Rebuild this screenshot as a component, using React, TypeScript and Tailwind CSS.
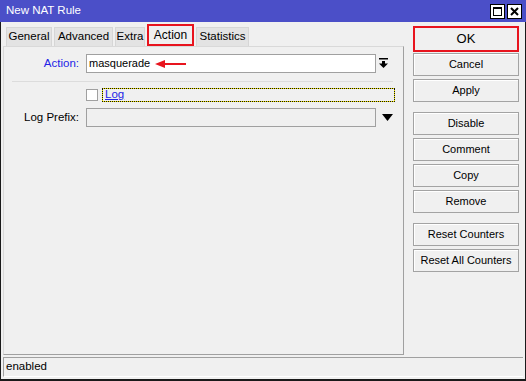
import React from "react";

const tabs = [
  { name: "General", w: "w-[46px]" },
  { name: "Advanced", w: "w-[59px]" },
  { name: "Extra", w: "w-[30px]" },
  { name: "Action", w: "w-[47px]", active: true },
  { name: "Statistics", w: "w-[53px]" },
];

function Btn({ label, red }: { label: string; red?: boolean }) {
  if (red) {
    return (
      <div className="h-[26px] w-[106px] border-2 border-[#e8141e] bg-[#f0f0f0] flex items-center justify-center text-[13px] text-black">
        {label}
      </div>
    );
  }
  return (
    <div className="h-[23px] w-[106px] border border-[#a3a3a3] bg-[#f0f0f0] shadow-[inset_1px_1px_0_#ffffff] flex items-center justify-center text-[11px] text-black">
      {label}
    </div>
  );
}

function ExpandIcon() {
  return (
    <svg width="9" height="10" viewBox="0 0 9 10">
      <rect x="0" y="0" width="9" height="1.5" fill="#000" />
      <rect x="3" y="3" width="3" height="3" fill="#000" />
      <polygon points="0,5.5 9,5.5 4.5,10" fill="#000" />
    </svg>
  );
}

export default function App() {
  return (
    <div className="w-[526px] h-[381px] bg-[#f0f0f0] flex flex-col overflow-hidden" style={{ fontFamily: '"Liberation Sans", Arial, sans-serif' }}>
      {/* Title bar */}
      <div className="h-[22px] bg-[#4b4fc8] flex items-center pl-[6px] pr-[4px] shrink-0">
        <span className="text-white text-[11.5px] flex-1">New NAT Rule</span>
        <div className="flex gap-[2px] mt-[1px]">
          <div className="w-[15px] h-[15px] bg-white border border-black flex items-center justify-center">
            <div className="w-[9px] h-[9px] border border-black border-t-2" />
          </div>
          <div className="w-[15px] h-[15px] bg-white border border-black flex items-center justify-center">
            <svg width="9" height="9" viewBox="0 0 9 9">
              <path d="M1 1 L8 8 M8 1 L1 8" stroke="#000" strokeWidth="2" />
            </svg>
          </div>
        </div>
      </div>

      {/* Window frame */}
      <div className="flex-1 flex flex-col border-l border-r border-b-2 border-[#1a1a1a]">
        <div className="h-[333px] flex">
          {/* Left: tabs + panel */}
          <div className="ml-[2px] w-[401px] flex flex-col">
            <div className="h-[24px] flex items-end gap-[2px] pl-[3px]">
              {tabs.map((t) =>
                t.active ? (
                  <div
                    key={t.name}
                    className={`${t.w} h-[22px] border-2 border-[#e8141e] bg-[#f0f0f0] flex items-center justify-center text-[12px] text-black`}
                  >
                    {t.name}
                  </div>
                ) : (
                  <div
                    key={t.name}
                    className={`${t.w} h-[19px] border border-b-0 border-[#d6d6d6] bg-[#e3e3e3] flex items-center justify-center text-[11.5px] text-black`}
                  >
                    {t.name}
                  </div>
                )
              )}
            </div>
            <div className="flex-1 border-l border-t border-[#d9d9d9] border-r border-r-[#a0a0a0] border-b border-b-[#a0a0a0] bg-[#f0f0f0] text-[11px]">
              {/* Action row */}
              <div className="mt-[7px] h-[19px] flex items-center">
                <span className="w-[75px] text-right text-[#2323e6] text-[11.5px]">Action:</span>
                <div className="ml-[7px] w-[290px] h-[19px] bg-white border border-[#a0a0a0] flex items-center pl-[2px] text-[11px] text-black relative">
                  masquerade
                  <svg className="absolute left-[68px] top-[5px]" width="31" height="8" viewBox="0 0 31 8">
                    <polygon points="0,4 10,0 10,3 31,3 31,5 10,5 10,8" fill="#e8141e" />
                  </svg>
                </div>
                <div className="ml-[3px] mt-[-1px]">
                  <ExpandIcon />
                </div>
              </div>
              {/* Separator */}
              <div className="mt-[8px] ml-[8px] w-[381px] h-px bg-[#dcdcdc]" />
              {/* Log checkbox */}
              <div className="mt-[6px] h-[14px] flex items-center">
                <div className="ml-[82px] w-[12px] h-[12px] bg-white border border-[#a0a0a0]" />
                <div className="ml-[4px] w-[293px] h-[14px] bg-[#f2e600]">
                  <div className="w-full h-full border border-dotted border-[#111] bg-[#f0f0f0] bg-clip-padding flex items-center pl-[2px]">
                    <span className="text-[#2323e6] text-[11.5px] underline decoration-[#2323e6]">Log</span>
                  </div>
                </div>
              </div>
              {/* Log prefix */}
              <div className="mt-[6px] h-[19px] flex items-center">
                <span className="w-[75px] text-right text-black text-[11.5px]">Log Prefix:</span>
                <div className="ml-[7px] w-[290px] h-[19px] bg-[#f0f0f0] border border-[#a0a0a0]" />
                <svg className="ml-[6px]" width="11" height="7" viewBox="0 0 11 7">
                  <polygon points="0,0 11,0 5.5,7" fill="#000" />
                </svg>
              </div>
            </div>
          </div>

          {/* Right: buttons */}
          <div className="ml-[9px] pt-[4px] flex flex-col">
            <Btn label="OK" red />
            <div className="mt-[1px] flex flex-col gap-[3px]">
              <Btn label="Cancel" />
              <Btn label="Apply" />
            </div>
            <div className="mt-[10px] flex flex-col gap-[3px]">
              <Btn label="Disable" />
              <Btn label="Comment" />
              <Btn label="Copy" />
              <Btn label="Remove" />
            </div>
            <div className="mt-[10px] flex flex-col gap-[3px]">
              <Btn label="Reset Counters" />
              <Btn label="Reset All Counters" />
            </div>
          </div>
        </div>

        {/* Status bar */}
        <div className="mt-[2px] mx-[2px] h-[20px] border-t border-l border-[#a0a0a0] border-b border-b-white flex items-center pl-[2px] text-[11.5px] text-black">
          enabled
        </div>
      </div>
    </div>
  );
}
